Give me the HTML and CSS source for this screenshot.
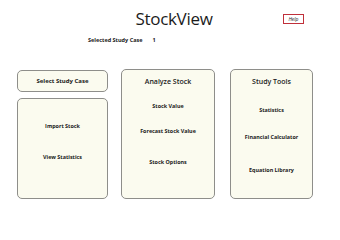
FILE: index.html
```html
<!DOCTYPE html>
<html>
<head>
<meta charset="utf-8">
<link rel="stylesheet" href="styles.css">
</head>
<body>
<div class="page">
  <header class="header">
    <div></div>
    <h1 class="title">StockView</h1>
    <div class="help-wrap"><button class="help">Help</button></div>
  </header>
  <div class="selected">
    <span class="sel-label">Selected Study Case</span>
    <span class="sel-value">1</span>
  </div>
  <main class="columns">
    <div class="col col-left">
      <div class="card card-small"><span class="card-title-sm">Select Study Case</span></div>
      <div class="card card-left">
        <span class="item item-import">Import Stock</span>
        <span class="item item-view">View Statistics</span>
      </div>
    </div>
    <div class="card col-mid">
      <span class="card-title">Analyze Stock</span>
      <span class="item mid-1">Stock Value</span>
      <span class="item mid-2">Forecast Stock Value</span>
      <span class="item mid-3">Stock Options</span>
    </div>
    <div class="card col-right">
      <span class="card-title">Study Tools</span>
      <span class="item r-1">Statistics</span>
      <span class="item r-2">Financial Calculator</span>
      <span class="item r-3">Equation Library</span>
    </div>
  </main>
</div>
</body>
</html>
```
FILE: styles.css
```css
* { box-sizing: border-box; }
body {
  margin: 0;
  background: #ffffff;
  font-family: "Open Sans", "Noto Sans", sans-serif;
  color: #1a1a1a;
}
.page {
  width: 340px;
  height: 240px;
  display: flex;
  flex-direction: column;
}
.header {
  display: grid;
  grid-template-columns: 1fr auto 1fr;
  align-items: center;
  padding-top: 7px;
  height: 31px;
}
.title {
  margin: 0;
  font-weight: 400;
  font-size: 17px;
  line-height: 24px;
  letter-spacing: -0.3px;
  color: #1c1c1c;
  padding-left: 8px;
}
.help-wrap {
  display: flex;
  justify-content: flex-end;
  padding-right: 36px;
}
.help {
  width: 21px;
  height: 10px;
  border: 1.5px solid #c0303a;
  background: #fff;
  font-family: "Open Sans", sans-serif;
  font-style: italic;
  font-size: 5px;
  padding: 0;
  color: #222;
  line-height: 6px;
}
.selected {
  display: flex;
  gap: 10px;
  padding-left: 88px;
  padding-top: 3px;
  height: 14px;
  align-items: center;
  font-weight: 700;
  font-size: 5.5px;
}
.columns {
  display: flex;
  padding-left: 17px;
  padding-top: 24px;
  align-items: flex-start;
}
.col-left {
  width: 91px;
  display: flex;
  flex-direction: column;
  gap: 6px;
  margin-top: 1px;
}
.card {
  background: #fbfbef;
  border: 1px solid #8e8e8a;
  border-radius: 5px;
  display: flex;
  flex-direction: column;
  align-items: center;
}
.card-small {
  height: 22px;
  justify-content: center;
}
.card-title-sm {
  font-weight: 700;
  font-size: 6px;
}
.card-left {
  height: 101px;
  padding-top: 23px;
}
.col-mid {
  width: 94px;
  height: 130px;
  margin-left: 13px;
  padding-top: 6px;
}
.col-right {
  width: 83px;
  height: 130px;
  margin-left: 15px;
  padding-top: 6px;
}
.card-title {
  font-weight: 600;
  font-size: 7px;
  line-height: 12px;
}
.item {
  font-weight: 700;
  font-size: 5.4px;
  line-height: 8px;
}
.item-view { margin-top: 23px; }
.mid-1 { margin-top: 14px; }
.mid-2 { margin-top: 17px; }
.mid-3 { margin-top: 23px; }
.r-1 { margin-top: 18px; }
.r-2 { margin-top: 19px; }
.r-3 { margin-top: 25px; }
```
